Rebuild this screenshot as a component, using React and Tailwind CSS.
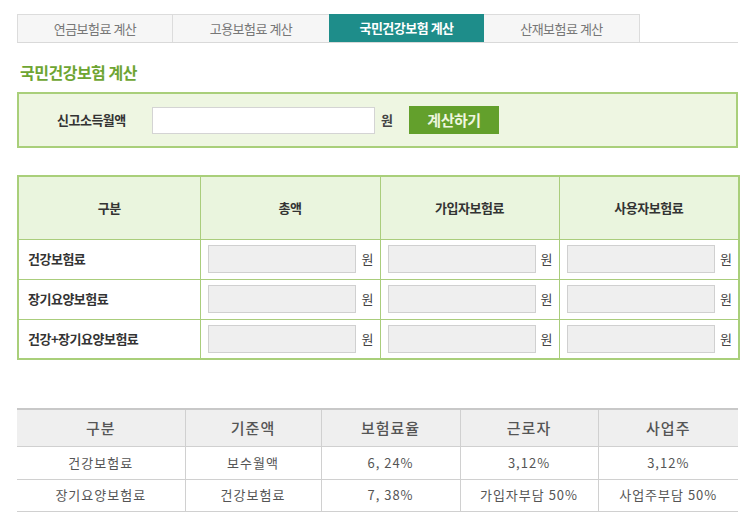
import React from "react";

const font = { fontFamily: '"Noto Sans CJK KR", "Noto Sans", sans-serif' };

function Tabs() {
  const tabs = ["연금보험료 계산", "고용보험료 계산", "국민건강보험 계산", "산재보험료 계산"];
  return (
    <div className="flex border-b border-[#d9d9d9] w-[721px]">
      {tabs.map((t, i) =>
        i === 2 ? (
          <div key={t} className="w-[155px] h-[28px] flex items-center justify-center bg-[#1e8d8a] text-white text-[13px] font-bold tracking-[-0.5px]">
            {t}
          </div>
        ) : (
          <div key={t} className={`w-[156px] h-[28px] flex items-center justify-center bg-[#f6f6f6] border-t border-[#dcdcdc] text-[#777] text-[13px] tracking-[-0.5px] ${i === 0 ? "border-l" : ""} ${i === 3 ? "border-r" : ""} ${i === 0 ? "border-r" : ""}`}>
            {t}
          </div>
        )
      )}
    </div>
  );
}

function Won({ className = "" }) {
  return <span className={`text-[13px] text-[#444] ${className}`}>원</span>;
}

function AmountCell() {
  return (
    <td className="border border-[#aacd7c] pl-[7px] pr-[6px]">
      <div className="flex items-center justify-between">
        <div className="w-[148px] h-[28px] bg-[#efefef] border border-[#d0d0d0]" />
        <Won />
      </div>
    </td>
  );
}

export default function App() {
  const rows = ["건강보험료", "장기요양보험료", "건강+장기요양보험료"];
  return (
    <div className="w-[756px] h-[527px] bg-white pl-[17px] pt-[14px]" style={font}>
      <Tabs />
      <div className="mt-[19px] h-[20px] flex items-center text-[16px] font-bold text-[#6ea532] pl-[3px] tracking-[-0.5px]">
        국민건강보험 계산
      </div>
      <div className="mt-[10px] w-[721px] h-[56px] border-2 border-[#a9cf7a] bg-[#eef6e2] flex items-center">
        <span className="ml-[38px] w-[95px] text-[13px] font-bold text-[#333] tracking-[-0.5px]">신고소득월액</span>
        <div className="w-[223px] h-[27px] bg-white border border-[#d4d4d4]" />
        <Won className="ml-[6px] font-bold" />
        <button className="ml-[16px] w-[90px] h-[28px] bg-[#63a02c] text-[#eef6df] text-[15px] font-bold tracking-[-0.5px]">
          계산하기
        </button>
      </div>

      <table className="mt-[27px] w-[721px] border-collapse border-2 border-[#a9cf7a] table-fixed">
        <colgroup>
          <col className="w-[182px]" />
          <col className="w-[180px]" />
          <col className="w-[179px]" />
          <col className="w-[180px]" />
        </colgroup>
        <thead>
          <tr className="h-[63px] bg-[#eaf5de]">
            {["구분", "총액", "가입자보험료", "사용자보험료"].map((h) => (
              <th key={h} className="border border-[#aacd7c] text-[13px] font-bold text-[#333] tracking-[-0.5px]">
                {h}
              </th>
            ))}
          </tr>
        </thead>
        <tbody>
          {rows.map((r) => (
            <tr key={r} className="h-[40px]">
              <td className="border border-[#aacd7c] pl-[9px] text-[13px] font-bold text-[#333] tracking-[-0.5px]">{r}</td>
              <AmountCell />
              <AmountCell />
              <AmountCell />
            </tr>
          ))}
        </tbody>
      </table>

      <table className="mt-[48px] w-[721px] border-collapse table-fixed text-[#555]">
        <colgroup>
          <col className="w-[168px]" />
          <col className="w-[136px]" />
          <col className="w-[139px]" />
          <col className="w-[138px]" />
          <col className="w-[140px]" />
        </colgroup>
        <thead>
          <tr className="h-[37px] bg-[#efefef] border-t-2 border-[#c8c8c8]">
            {["구분", "기준액", "보험료율", "근로자", "사업주"].map((h, i) => (
              <th key={h} className={`text-[15px] font-medium text-[#555] tracking-[1px] border-b border-[#d0d0d0] ${i > 0 ? "border-l" : ""}`}>
                {h}
              </th>
            ))}
          </tr>
        </thead>
        <tbody>
          {[
            ["건강보험료", "보수월액", "6, 24%", "3,12%", "3,12%"],
            ["장기요양보험료", "건강보험료", "7, 38%", "가입자부담 50%", "사업주부담 50%"],
          ].map((row, ri) => (
            <tr key={ri} className={ri === 0 ? "h-[33px]" : "h-[32px]"}>
              {row.map((c, i) => (
                <td key={i} className={`text-center text-[13px] tracking-[1px] border-b border-[#d0d0d0] ${i > 0 ? "border-l" : ""}`}>
                  {c}
                </td>
              ))}
            </tr>
          ))}
        </tbody>
      </table>
    </div>
  );
}
